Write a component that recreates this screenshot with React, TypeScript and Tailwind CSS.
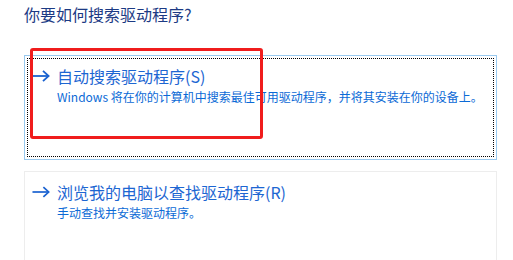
import React from "react";

const Arrow = ({ w = 19 }: { w?: number }) => (
  <svg width={w} height="12" viewBox="0 0 19 12" fill="none" className="shrink-0">
    <path d="M0.5 6H17.5" stroke="#1a62d0" strokeWidth="1.8" />
    <path d="M12 0.8L17.6 6L12 11.2" stroke="#1a62d0" strokeWidth="1.8" fill="none" />
  </svg>
);

export default function App() {
  return (
    <div
      className="relative w-[513px] h-[260px] overflow-hidden bg-white pl-[24px] pr-[16px] pt-[2px]"
      style={{ fontFamily: '"Noto Sans CJK SC", "Noto Sans", sans-serif' }}
    >
      <div className="text-[16px] leading-[24px] text-[#1c3a84]">你要如何搜索驱动程序?</div>

      <div className="mt-[29px] w-[473px] border border-[#99c9ef] p-[2px]">
        <div className="h-[99px] border border-dotted border-black pl-[3px] pt-[5px]">
          <div className="flex items-center gap-[7px]">
            <Arrow />
            <span className="text-[16px] leading-[24px] text-[#1d66d2]">自动搜索驱动程序(S)</span>
          </div>
          <div className="pl-[26px] text-[12px] leading-[17px] text-[#0b6ad6] whitespace-nowrap">
            Windows 将在你的计算机中搜索最佳可用驱动程序，并将其安装在你的设备上。
          </div>
        </div>
      </div>

      <div className="mt-[11px] w-[473px] h-[90px] border border-[#ededed] p-[2px]">
        <div className="h-full border border-transparent pl-[4px] pt-[5px]">
          <div className="flex items-center gap-[7px]">
            <Arrow w={18} />
            <span className="text-[16px] leading-[24px] text-[#1d66d2]">浏览我的电脑以查找驱动程序(R)</span>
          </div>
          <div className="pl-[25px] text-[12px] leading-[17px] text-[#0b6ad6] whitespace-nowrap">
            手动查找并安装驱动程序。
          </div>
        </div>
      </div>

      <div className="absolute left-[30px] top-[48px] w-[233px] h-[91px] rounded-[3px] border-[3px] border-[#f01c1c]" />
    </div>
  );
}
